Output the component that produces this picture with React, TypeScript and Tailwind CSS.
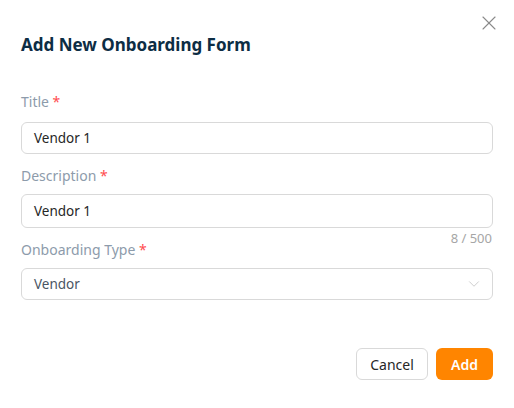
import { X, ChevronDown } from "lucide-react";

function Label({ text }: { text: string }) {
    return (
        <div className="text-[14px] leading-[20px] text-[#8d9bab]">
            {text} <span className="text-[#ff4d4f]">*</span>
        </div>
    );
}

export default function App() {
    return (
        <div
            className="relative w-[514px] h-[408px] bg-white px-[21px] pt-[33px]"
            style={{ fontFamily: '"Noto Sans", "Open Sans", sans-serif' }}
        >
            <button className="absolute top-[11px] right-[13px] text-[#8a8a8a]">
                <X size={24} strokeWidth={1.1} />
            </button>

            <h2 className="text-[17px] leading-[24px] font-bold text-[#0d2d44]">
                Add New Onboarding Form
            </h2>

            <div className="mt-[35px]">
                <Label text="Title" />
                <div className="mt-[10px] h-[32px] rounded-[6px] border border-[#d9d9d9] px-[12px] flex items-center text-[13.5px] text-[#262626]">
                    Vendor 1
                </div>
            </div>

            <div className="mt-[12px]">
                <Label text="Description" />
                <div className="mt-[8px] h-[34px] rounded-[6px] border border-[#d9d9d9] px-[12px] flex items-center text-[13.5px] text-[#262626]">
                    Vendor 1
                </div>
                <div className="h-[12px] text-right text-[13px] leading-[20px] text-[#a6a6a6] pr-[1px]">
                    8 / 500
                </div>
            </div>

            <div>
                <Label text="Onboarding Type" />
                <div className="mt-[8px] h-[32px] rounded-[6px] border border-[#d9d9d9] pl-[12px] pr-[9px] flex items-center justify-between text-[13.5px] text-[#4a5563]">
                    <span>Vendor</span>
                    <ChevronDown size={18} strokeWidth={1} className="text-[#bdbdbd]" />
                </div>
            </div>

            <div className="mt-[48px] flex justify-end gap-[8px]">
                <button className="h-[32px] w-[72px] rounded-[6px] border border-[#d9d9d9] bg-white text-[14px] text-[#262626]">
                    Cancel
                </button>
                <button className="h-[32px] w-[57px] rounded-[6px] bg-[#ff8500] text-[14px] font-semibold text-white">
                    Add
                </button>
            </div>
        </div>
    );
}
